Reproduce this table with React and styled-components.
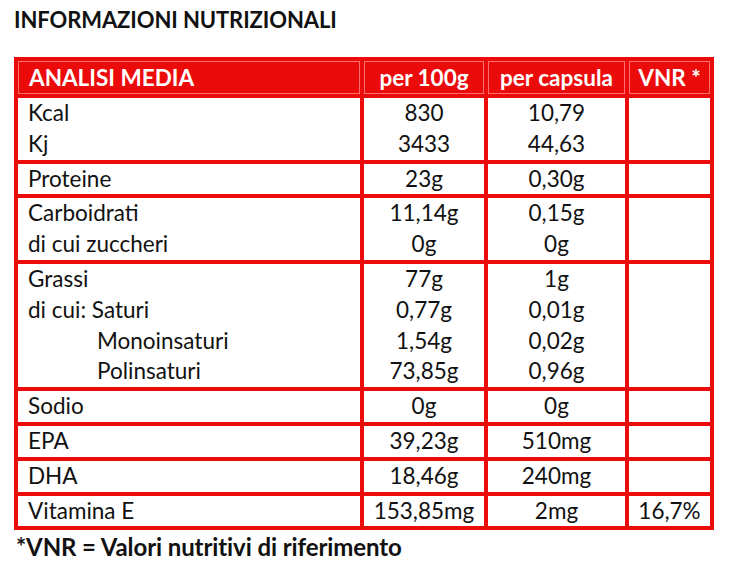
import React from 'react';
import styled, { createGlobalStyle } from 'styled-components';

const RED = '#ec0b0b';

const GlobalStyle = createGlobalStyle`
  html, body {
    margin: 0;
    padding: 0;
    background: #fff;
  }
  body {
    font-family: Lato, "Open Sans", "Liberation Sans", sans-serif;
    color: #111;
  }
`;

const Page = styled.div`
  width: 732px;
  height: 568px;
  padding: 6px 0 0 14px;
  box-sizing: border-box;
  overflow: hidden;
`;

const Title = styled.h1`
  margin: 0 0 23px 0;
  font-size: 22px;
  line-height: 28px;
  font-weight: 700;
  letter-spacing: -0.1px;
`;

const Table = styled.div`
  display: grid;
  grid-template-columns: 342px 120px 137px 81px;
  gap: 4px;
  padding: 4px;
  width: 700px;
  box-sizing: border-box;
  background: ${RED};
`;

const HeadCell = styled.div`
  height: 33px;
  line-height: 33px;
  background: ${RED};
  color: #fff;
  font-size: 22.5px;
  font-weight: 700;
  white-space: nowrap;
  text-align: ${(p) => (p.$left ? 'left' : 'center')};
  padding-left: ${(p) => (p.$left ? '11px' : '0')};
  box-shadow: inset 0 0 0 1px #ff7070;
`;

const Cell = styled.div`
  background: #fff;
  font-size: 22.5px;
  line-height: 30.8px;
  text-align: ${(p) => (p.$left ? 'left' : 'center')};
  padding-left: ${(p) => (p.$left ? '10px' : '0')};
`;

const Line = styled.div`
  height: 30.8px;
  padding-left: ${(p) => (p.$indent ? '69px' : '0')};
  white-space: nowrap;
`;

const Note = styled.p`
  margin: 5px 0 0 2px;
  font-size: 24px;
  line-height: 24px;
  font-weight: 700;
  letter-spacing: -0.1px;
`;

const rows = [
  { label: ['Kcal', 'Kj'], g: ['830', '3433'], cap: ['10,79', '44,63'], vnr: [] },
  { label: ['Proteine'], g: ['23g'], cap: ['0,30g'], vnr: [] },
  { label: ['Carboidrati', 'di cui zuccheri'], g: ['11,14g', '0g'], cap: ['0,15g', '0g'], vnr: [] },
  {
    label: ['Grassi', 'di cui: Saturi', { t: 'Monoinsaturi', indent: true }, { t: 'Polinsaturi', indent: true }],
    g: ['77g', '0,77g', '1,54g', '73,85g'],
    cap: ['1g', '0,01g', '0,02g', '0,96g'],
    vnr: [],
  },
  { label: ['Sodio'], g: ['0g'], cap: ['0g'], vnr: [] },
  { label: ['EPA'], g: ['39,23g'], cap: ['510mg'], vnr: [] },
  { label: ['DHA'], g: ['18,46g'], cap: ['240mg'], vnr: [] },
  { label: ['Vitamina E'], g: ['153,85mg'], cap: ['2mg'], vnr: ['16,7%'] },
];

const Lines = ({ items }) =>
  items.map((it, i) =>
    typeof it === 'string' ? (
      <Line key={i}>{it}</Line>
    ) : (
      <Line key={i} $indent={it.indent}>
        {it.t}
      </Line>
    )
  );

export default function App() {
  return (
    <>
      <GlobalStyle />
      <Page>
        <Title>INFORMAZIONI NUTRIZIONALI</Title>
        <Table>
          <HeadCell $left>ANALISI MEDIA</HeadCell>
          <HeadCell>per 100g</HeadCell>
          <HeadCell>per capsula</HeadCell>
          <HeadCell>VNR *</HeadCell>
          {rows.map((r, i) => (
            <React.Fragment key={i}>
              <Cell $left>
                <Lines items={r.label} />
              </Cell>
              <Cell>
                <Lines items={r.g} />
              </Cell>
              <Cell>
                <Lines items={r.cap} />
              </Cell>
              <Cell>
                <Lines items={r.vnr} />
              </Cell>
            </React.Fragment>
          ))}
        </Table>
        <Note>*VNR = Valori nutritivi di riferimento</Note>
      </Page>
    </>
  );
}
